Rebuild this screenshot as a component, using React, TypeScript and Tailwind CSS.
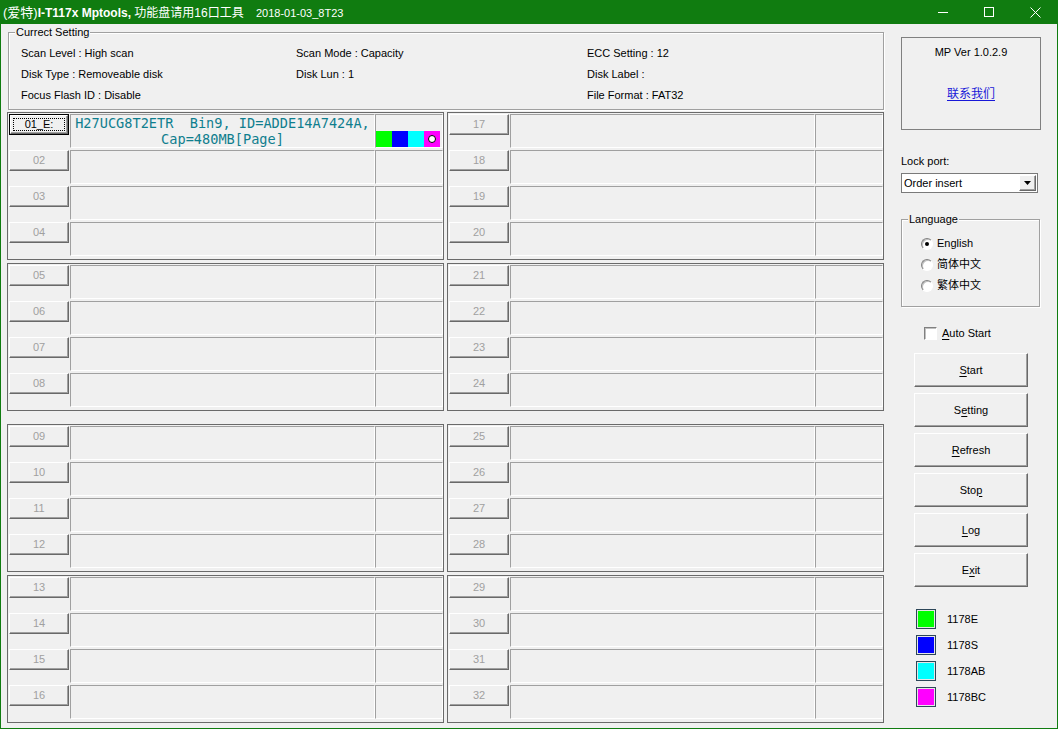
import type { ReactNode } from "react";

// Raised 3D button edge used by the classic controls
const raised =
  "border border-t-white border-l-white border-b-[#696969] border-r-[#696969] shadow-[inset_-1px_-1px_0_#a0a0a0] bg-[#f0f0f0]";
// Sunken static cell
const sunken = "border border-t-[#a0a0a0] border-l-[#a0a0a0] border-b-white border-r-white";
// Etched group frame
const etched = "border border-[#a0a0a0] shadow-[inset_1px_1px_0_#fff,1px_1px_0_#fff]";

function TitleBar() {
  return (
    <div className="flex h-[24px] items-center bg-[#107c10] text-white">
      <div className="flex-1 pl-[3px] text-[11px] leading-none whitespace-pre">
        <span className="text-[13px]">(爱特)</span>
        <span className="font-bold text-[12px]">I-T117x Mptools,</span>
        <span className="text-[12px]"> 功能盘请用16口工具</span>
        <span className="text-[11px]">    2018-01-03_8T23</span>
      </div>
      <div className="flex h-full">
        <div className="flex w-[46px] items-center justify-center">
          <svg width="10" height="10" viewBox="0 0 10 10">
            <path d="M0 5.5h10" stroke="white" strokeWidth="1" />
          </svg>
        </div>
        <div className="flex w-[46px] items-center justify-center">
          <svg width="10" height="10" viewBox="0 0 10 10">
            <rect x="0.5" y="0.5" width="9" height="9" fill="none" stroke="white" strokeWidth="1" />
          </svg>
        </div>
        <div className="flex w-[46px] items-center justify-center">
          <svg width="11" height="11" viewBox="0 0 11 11">
            <path d="M0.5 0.5l10 10M10.5 0.5l-10 10" stroke="white" strokeWidth="1" />
          </svg>
        </div>
      </div>
    </div>
  );
}

function CurrentSetting() {
  const items = [
    "Scan Level : High scan",
    "Scan Mode : Capacity",
    "ECC Setting : 12",
    "Disk Type : Removeable disk",
    "Disk Lun : 1",
    "Disk Label :",
    "Focus Flash ID : Disable",
    "",
    "File Format : FAT32",
  ];
  return (
    <div className={`relative mt-[8px] ml-[1px] h-[78px] w-[876px] ${etched}`}>
      <span className="absolute -top-[7px] left-[6px] bg-[#f0f0f0] px-[1px] leading-[13px]">
        Currect Setting
      </span>
      <div className="grid grid-cols-[275px_291px_1fr] pt-[10px] pl-[12px] leading-[21px]">
        {items.map((t, i) => (
          <div key={i} className="h-[21px]">
            {t}
          </div>
        ))}
      </div>
    </div>
  );
}

function Swatches() {
  return (
    <div className="flex">
      <div className="h-[16px] w-[16px] bg-[#00ff00]" />
      <div className="h-[16px] w-[16px] bg-[#0000ff]" />
      <div className="h-[16px] w-[16px] bg-[#00ffff]" />
      <div className="flex h-[16px] w-[16px] items-center justify-center bg-[#ff00ff]">
        <div className="h-[8px] w-[8px] rounded-full border border-black bg-white" />
      </div>
    </div>
  );
}

function PortRow({ n }: { n: number }) {
  const active = n === 1;
  const label = String(n).padStart(2, "0");
  return (
    <div className="flex h-[34px]">
      {active ? (
        <div className="ml-[1px] h-[21px] w-[60px] border border-black">
          <div className={`h-full w-full ${raised} p-[2px]`}>
            <div className="flex h-full w-full items-center justify-center border border-dotted border-black leading-none text-black">
              01_E:
            </div>
          </div>
        </div>
      ) : (
        <div
          className={`ml-[1px] flex h-[21px] w-[60px] items-center justify-center leading-none text-[#a0a0a0] ${raised}`}
        >
          {label}
        </div>
      )}
      <div
        className={`ml-[1px] flex h-full w-[305px] flex-col items-center justify-center ${sunken} font-['DejaVu_Sans_Mono',monospace] text-[13.6px] leading-[16px] text-[#0f7e8e] whitespace-pre`}
      >
        {active && (
          <>
            <span>H27UCG8T2ETR  Bin9, ID=ADDE14A7424A,</span>
            <span>Cap=480MB[Page]</span>
          </>
        )}
      </div>
      <div className={`flex h-full w-[68px] items-end ${sunken}`}>{active && <Swatches />}</div>
    </div>
  );
}

function PortGroup({ start }: { start: number }) {
  return (
    <div className="flex h-[148px] flex-col gap-[2px] border border-[#6a6a6a] pt-[1px]">
      {[0, 1, 2, 3].map((i) => (
        <PortRow key={i} n={start + i} />
      ))}
    </div>
  );
}

function Ports() {
  return (
    <div className="mt-[2px] flex flex-col gap-[13px]">
      <div className="grid grid-cols-[437px_437px] gap-[3px]">
        <PortGroup start={1} />
        <PortGroup start={17} />
        <PortGroup start={5} />
        <PortGroup start={21} />
      </div>
      <div className="grid grid-cols-[437px_437px] gap-[3px]">
        <PortGroup start={9} />
        <PortGroup start={25} />
        <PortGroup start={13} />
        <PortGroup start={29} />
      </div>
    </div>
  );
}

function Radio({ checked, children }: { checked?: boolean; children: ReactNode }) {
  return (
    <div className="flex h-[21px] items-center">
      <span className="flex h-[12px] w-[12px] items-center justify-center rounded-full border border-t-[#808080] border-l-[#808080] border-b-white border-r-white bg-white shadow-[inset_1px_1px_0_#c0c0c0]">
        {checked && <span className="h-[4px] w-[4px] rounded-full bg-black" />}
      </span>
      <span className="ml-[4px] leading-[13px]">{children}</span>
    </div>
  );
}

function SideButton({ children }: { children: ReactNode }) {
  return (
    <div className={`flex h-[34px] w-[114px] items-center justify-center ${raised}`}>{children}</div>
  );
}

const u = "underline underline-offset-[2px]";

function SidePanel() {
  const legend = [
    ["#00ff00", "1178E"],
    ["#0000ff", "1178S"],
    ["#00ffff", "1178AB"],
    ["#ff00ff", "1178BC"],
  ];
  return (
    <div className="ml-[17px] flex w-[140px] flex-col">
      <div className="mt-[13px] flex h-[93px] w-[140px] flex-col items-center border border-[#808080] pt-[7px]">
        <span className="leading-[14px]">MP Ver 1.0.2.9</span>
        <span className="mt-[28px] text-[12px] leading-[14px] text-[#1818d8] underline underline-offset-[2px]">
          联系我们
        </span>
      </div>
      <span className="mt-[24px] leading-[14px]">Lock port:</span>
      <div className="mt-[5px] flex h-[20px] w-[137px] items-center border border-[#7a7a7a] bg-white pl-[2px]">
        <span className="flex-1">Order insert</span>
        <div className={`mr-[1px] flex h-[16px] w-[17px] items-center justify-center ${raised}`}>
          <svg width="7" height="4" viewBox="0 0 7 4">
            <path d="M0 0h7L3.5 4z" fill="black" />
          </svg>
        </div>
      </div>
      <div className={`relative mt-[26px] h-[88px] w-[139px] ${etched} pt-[13px] pl-[19px]`}>
        <span className="absolute -top-[7px] left-[6px] bg-[#f0f0f0] px-[1px] leading-[13px]">
          Language
        </span>
        <Radio checked>English</Radio>
        <Radio>简体中文</Radio>
        <Radio>繁体中文</Radio>
      </div>
      <div className="mt-[20px] ml-[23px] flex h-[13px] items-center">
        <span className="h-[13px] w-[13px] border border-t-[#808080] border-l-[#808080] border-b-white border-r-white bg-white shadow-[inset_1px_1px_0_#c0c0c0]" />
        <span className="ml-[5px]">
          <span className={u}>A</span>uto Start
        </span>
      </div>
      <div className="mt-[13px] ml-[13px] flex flex-col gap-[6px]">
        <SideButton>
          <span className={u}>S</span>tart
        </SideButton>
        <SideButton>
          S<span className={u}>e</span>tting
        </SideButton>
        <SideButton>
          <span className={u}>R</span>efresh
        </SideButton>
        <SideButton>
          Sto<span className={u}>p</span>
        </SideButton>
        <SideButton>
          <span className={u}>L</span>og
        </SideButton>
        <SideButton>
          E<span className={u}>x</span>it
        </SideButton>
      </div>
      <div className="mt-[22px] ml-[15px] flex flex-col gap-[6px]">
        {legend.map(([c, name]) => (
          <div key={name} className="flex items-center">
            <div
              className="h-[20px] w-[20px] border border-[#2c4658] shadow-[inset_0_0_0_1px_#e6e6e6]"
              style={{ backgroundColor: c }}
            />
            <span className="ml-[11px]">{name}</span>
          </div>
        ))}
      </div>
    </div>
  );
}

export default function App() {
  return (
    <div className="flex h-[729px] w-[1058px] flex-col bg-[#f0f0f0] font-['Liberation_Sans','Noto_Sans_CJK_SC',sans-serif] text-[11px] text-black">
      <TitleBar />
      <div className="flex flex-1 border-x border-b border-[#107c10]">
        <div className="ml-[6px] w-[877px]">
          <CurrentSetting />
          <Ports />
        </div>
        <SidePanel />
      </div>
    </div>
  );
}
